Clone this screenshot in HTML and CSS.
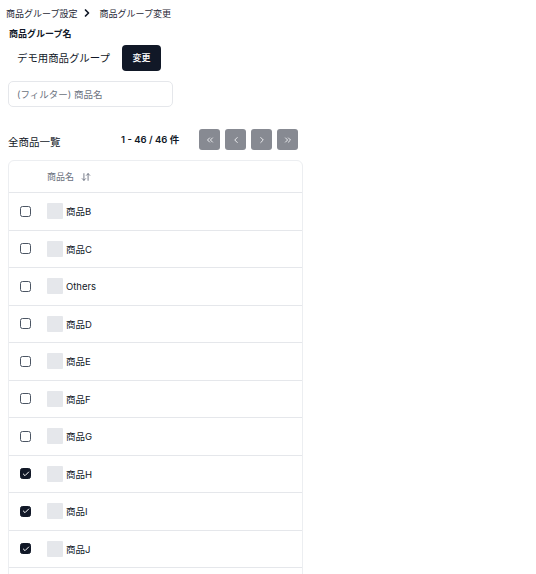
FILE: index.html
```html
<!DOCTYPE html>
<html lang="ja">
<head>
<meta charset="utf-8">
<title>商品グループ変更</title>
<link rel="stylesheet" href="styles.css">
</head>
<body>
<div class="page">
  <nav class="breadcrumb">
    <span>商品グループ設定</span>
    <svg class="crumb-sep" viewBox="0 0 24 24" width="12" height="12"><path d="m9 18 6-6-6-6"/></svg>
    <span>商品グループ変更</span>
  </nav>

  <div class="group-label">商品グループ名</div>
  <div class="group-row">
    <span class="group-name">デモ用商品グループ</span>
    <button class="btn-dark">変更</button>
  </div>

  <input class="filter" type="text" placeholder="(フィルター) 商品名">

  <div class="list-header">
    <div class="list-title">全商品一覧</div>
    <div class="count">1 - 46 / 46 件</div>
    <div class="pager">
      <button class="page-btn"><svg viewBox="0 0 24 24"><path d="m11 17-5-5 5-5"/><path d="m18 17-5-5 5-5"/></svg></button>
      <button class="page-btn"><svg viewBox="0 0 24 24"><path d="m15 18-6-6 6-6"/></svg></button>
      <button class="page-btn"><svg viewBox="0 0 24 24"><path d="m9 18 6-6-6-6"/></svg></button>
      <button class="page-btn"><svg viewBox="0 0 24 24"><path d="m6 17 5-5-5-5"/><path d="m13 17 5-5-5-5"/></svg></button>
    </div>
  </div>

  <div class="table">
    <div class="thead">
      <div class="col-check"></div>
      <div class="th-name">商品名
        <svg class="sort" viewBox="0 0 24 24"><path d="m3 16 4 4 4-4"/><path d="M7 20V4"/><path d="m21 8-4-4-4 4"/><path d="M17 4v16"/></svg>
      </div>
    </div>
    <div class="row"><div class="col-check"><span class="cb"></span></div><span class="thumb"></span><span class="name">商品B</span></div>
    <div class="row"><div class="col-check"><span class="cb"></span></div><span class="thumb"></span><span class="name">商品C</span></div>
    <div class="row"><div class="col-check"><span class="cb"></span></div><span class="thumb"></span><span class="name">Others</span></div>
    <div class="row"><div class="col-check"><span class="cb"></span></div><span class="thumb"></span><span class="name">商品D</span></div>
    <div class="row"><div class="col-check"><span class="cb"></span></div><span class="thumb"></span><span class="name">商品E</span></div>
    <div class="row"><div class="col-check"><span class="cb"></span></div><span class="thumb"></span><span class="name">商品F</span></div>
    <div class="row"><div class="col-check"><span class="cb"></span></div><span class="thumb"></span><span class="name">商品G</span></div>
    <div class="row"><div class="col-check"><span class="cb checked"><svg viewBox="0 0 24 24"><path d="M20 6 9 17l-5-5"/></svg></span></div><span class="thumb"></span><span class="name">商品H</span></div>
    <div class="row"><div class="col-check"><span class="cb checked"><svg viewBox="0 0 24 24"><path d="M20 6 9 17l-5-5"/></svg></span></div><span class="thumb"></span><span class="name">商品I</span></div>
    <div class="row"><div class="col-check"><span class="cb checked"><svg viewBox="0 0 24 24"><path d="M20 6 9 17l-5-5"/></svg></span></div><span class="thumb"></span><span class="name">商品J</span></div>
    <div class="row row-blank"></div>
  </div>
</div>
</body>
</html>
```

FILE: styles.css
```css
* { box-sizing: border-box; }
body {
  margin: 0;
  background: #fff;
  color: #111827;
  font-family: Inter, "Noto Sans CJK JP", sans-serif;
}
.page {
  padding: 6px 8px 0 8px;
}
.breadcrumb {
  display: flex;
  align-items: center;
  height: 14px;
  margin-left: -2px;
  font-size: 9px;
  color: #1f2937;
}
.crumb-sep {
  margin: 0 6px 0 4px;
  fill: none;
  stroke: #111827;
  stroke-width: 3.4;
  stroke-linecap: round;
  stroke-linejoin: round;
}
.group-label {
  margin-top: 8px;
  margin-left: 1px;
  font-size: 9px;
  font-weight: 700;
  line-height: 12px;
}
.group-row {
  display: flex;
  align-items: center;
  margin-top: 4px;
  height: 27px;
}
.group-name {
  padding-left: 9px;
  font-size: 10.4px;
}
.btn-dark {
  margin-left: 12px;
  height: 26px;
  width: 39px;
  padding: 0;
  border: none;
  border-radius: 4px;
  background: #111827;
  color: #fff;
  font-family: inherit;
  font-size: 9px;
  font-weight: 500;
}
.filter {
  display: block;
  margin-top: 10px;
  width: 165px;
  height: 26px;
  padding: 0 8px;
  border: 1px solid #e5e7eb;
  border-radius: 5px;
  font-family: inherit;
  font-size: 9.5px;
  color: #111827;
  outline: none;
}
.filter::placeholder { color: #6b7280; }
.list-header {
  display: flex;
  align-items: center;
  margin-top: 22px;
  height: 21px;
}
.list-title {
  width: 113px;
  font-size: 10.5px;
  line-height: 14px;
  position: relative;
  top: 3px;
}
.count {
  font-size: 9.5px;
  font-weight: 600;
  width: 78px;
  position: relative;
  top: -1px;
}
.pager {
  display: flex;
  gap: 5px;
}
.page-btn {
  width: 21px;
  height: 21px;
  padding: 0;
  border: none;
  border-radius: 3px;
  background: #878a92;
  display: flex;
  align-items: center;
  justify-content: center;
}
.page-btn svg {
  width: 10px;
  height: 10px;
  fill: none;
  stroke: #f3f4f6;
  stroke-width: 2.2;
  stroke-linecap: round;
  stroke-linejoin: round;
}
.table {
  margin-top: 10px;
  width: 295px;
  border: 1px solid #eceef1;
  border-radius: 6px;
}
.thead {
  display: flex;
  align-items: center;
  height: 32px;
  border-bottom: 1px solid #e5e7eb;
}
.col-check {
  width: 38px;
  padding-left: 11px;
  display: flex;
  align-items: center;
}
.th-name {
  display: flex;
  align-items: center;
  font-size: 9px;
  color: #6b7280;
}
.sort {
  width: 10px;
  height: 10px;
  margin-left: 7px;
  fill: none;
  stroke: #6b7280;
  stroke-width: 2.2;
  stroke-linecap: round;
  stroke-linejoin: round;
}
.row {
  display: flex;
  align-items: center;
  height: 37.5px;
  border-bottom: 1px solid #e5e7eb;
}
.row-blank {
  border-bottom: none;
}
.cb {
  width: 11px;
  height: 11px;
  border: 1px solid #4b5563;
  border-radius: 2.5px;
  display: flex;
  align-items: center;
  justify-content: center;
}
.cb.checked {
  background: #111827;
  border-color: #111827;
}
.cb svg {
  width: 8px;
  height: 8px;
  fill: none;
  stroke: #fff;
  stroke-width: 3;
  stroke-linecap: round;
  stroke-linejoin: round;
}
.thumb {
  width: 16px;
  height: 16px;
  background: #e5e7eb;
  border-radius: 1px;
}
.name {
  margin-left: 3px;
  font-size: 9.5px;
}
```
